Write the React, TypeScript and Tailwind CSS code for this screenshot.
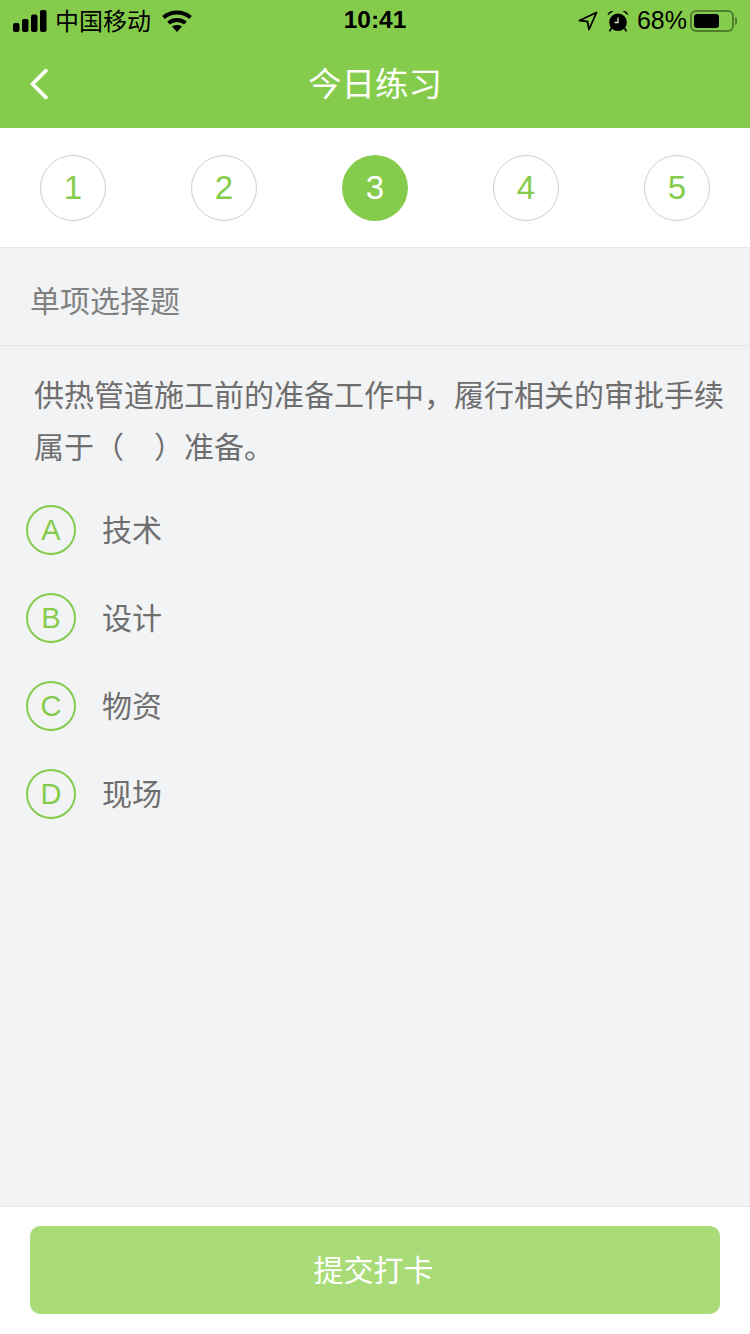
const font = "font-['Liberation_Sans','Noto_Sans_CJK_SC',sans-serif]";

const steps = ["1", "2", "3", "4", "5"];
const options = [
  { key: "A", label: "技术" },
  { key: "B", label: "设计" },
  { key: "C", label: "物资" },
  { key: "D", label: "现场" },
];

const SignalIcon = () => (
  <svg width="34" height="22" viewBox="0 0 34 22" fill="#000">
    <rect x="0" y="13" width="6.5" height="9" rx="2" />
    <rect x="9" y="9" width="6.5" height="13" rx="2" />
    <rect x="18" y="4.5" width="6.5" height="17.5" rx="2" />
    <rect x="27" y="0" width="6.5" height="22" rx="2" />
  </svg>
);

const WifiIcon = () => (
  <svg width="30" height="22" viewBox="0 0 30 22" fill="none" stroke="#000" strokeWidth="4">
    <path d="M1.5 7.5C9 .8 21 .8 28.5 7.5" />
    <path d="M6.5 13c4.8-4 12.2-4 17 0" />
    <path d="M15 22l-5-5.6c2.9-2 7.1-2 10 0z" fill="#000" stroke="none" />
  </svg>
);

const LocationIcon = () => (
  <svg width="20" height="20" viewBox="0 0 20 20" fill="none" stroke="#000" strokeWidth="1.8" strokeLinejoin="round">
    <path d="M18.5 1.5L1.5 9.5l8 1 1.5 8z" />
  </svg>
);

const AlarmIcon = () => (
  <svg width="22" height="22" viewBox="0 0 22 22" fill="#000">
    <circle cx="11" cy="12.2" r="8.8" />
    <path d="M.6 5.6C.8 2.4 3.4.4 6.4 1zM21.4 5.6C21.2 2.4 18.6.4 15.6 1z" />
    <path d="M4.5 18l-2 3.4M17.5 18l2 3.4" stroke="#000" strokeWidth="1.8" />
    <path d="M11 7.5v5H7.5" stroke="#d8eac8" strokeWidth="1.3" fill="none" />
  </svg>
);

const BatteryIcon = () => (
  <div className="flex items-center gap-[1px]">
    <div className="flex h-[22px] w-[44px] items-center rounded-[6px] border-2 border-[#4f7f2e] p-[2px]">
      <div className="h-full w-[25px] rounded-[3px] bg-black" />
    </div>
    <div className="h-[8px] w-[2px] rounded-r-sm bg-[#4f7f2e]" />
  </div>
);

const BackIcon = () => (
  <svg width="20" height="32" viewBox="0 0 20 32" fill="none" stroke="#fff" strokeWidth="3.6">
    <path d="M18 1.5L3.5 16 18 30.5" />
  </svg>
);

export default function App() {
  return (
    <div className={`flex h-[1334px] w-[750px] flex-col overflow-hidden bg-[#f2f3f5] ${font}`}>
      <div className="h-[128px] bg-[#86cc4c]">
        <div className="grid h-[40px] grid-cols-3 items-center pl-[13px] pr-[13px] pt-[1px] text-black">
          <div className="flex items-center">
            <SignalIcon />
            <span className="ml-[8px] mt-[2px] whitespace-nowrap text-[24px]">中国移动</span>
            <span className="ml-[11px]"><WifiIcon /></span>
          </div>
          <div className="text-center text-[24.5px] font-bold">10:41</div>
          <div className="flex items-center justify-end">
            <LocationIcon />
            <span className="ml-[9px]"><AlarmIcon /></span>
            <span className="ml-[8px] text-[25px]">68%</span>
            <span className="ml-[3px]"><BatteryIcon /></span>
          </div>
        </div>
        <div className="grid h-[88px] grid-cols-3 items-center text-white">
          <div className="pl-[29px]">
            <BackIcon />
          </div>
          <div className="whitespace-nowrap pt-[2px] text-center text-[33.5px]">今日练习</div>
        </div>
      </div>

      <div className="flex h-[120px] items-center justify-between border-b border-[#e6e6e6] bg-white px-[40px] pt-[1px]">
        {steps.map((n) =>
          n === "3" ? (
            <div key={n} className="flex h-[66px] w-[66px] items-center justify-center rounded-full bg-[#86cc4c] text-[33px] text-white">
              {n}
            </div>
          ) : (
            <div key={n} className="flex h-[66px] w-[66px] items-center justify-center rounded-full border border-[#cfcfcf] text-[33px] text-[#86cc4c]">
              {n}
            </div>
          )
        )}
      </div>

      <div className="flex h-[98px] items-center border-b border-[#e6e7e9] pl-[30px] pt-[10px] text-[30px] text-[#808080]">
        单项选择题
      </div>

      <div className="flex-1">
        <p className="pl-[34px] pr-[20px] pt-[24px] text-[30px] leading-[52px] text-[#6e6e6e]">
          供热管道施工前的准备工作中，履行相关的审批手续属于（　）准备。
        </p>
        <div className="mt-[31px] flex flex-col gap-[38px] pl-[26px]">
          {options.map((o) => (
            <div key={o.key} className="flex items-center">
              <div className="flex h-[50px] w-[50px] items-center justify-center rounded-full border-2 border-[#86cc4c] pt-[1px] text-[29px] text-[#86cc4c]">
                {o.key}
              </div>
              <span className="ml-[26px] text-[30px] text-[#6e6e6e]">{o.label}</span>
            </div>
          ))}
        </div>
      </div>

      <div className="h-[128px] border-t border-[#e6e7e9] bg-white px-[30px] pt-[19px]">
        <button className="flex h-[88px] w-full items-center justify-center rounded-[10px] bg-[#a9dc78] pr-[3px] text-[30px] text-white">
          提交打卡
        </button>
      </div>
    </div>
  );
}
